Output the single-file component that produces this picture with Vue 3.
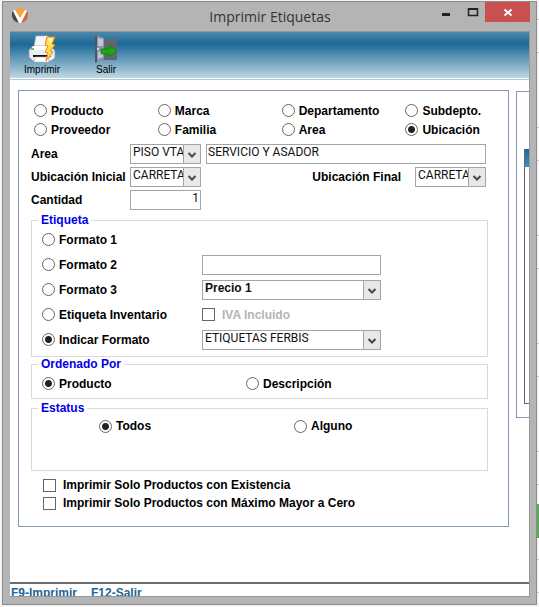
<script setup>
import { ref } from 'vue'

const filters = ['Producto', 'Marca', 'Departamento', 'Subdepto.', 'Proveedor', 'Familia', 'Area', 'Ubicación']
const filter = ref('Ubicación')
const area = ref('PISO VTA')
const areaName = ref('SERVICIO Y ASADOR')
const from = ref('CARRETA')
const to = ref('CARRETA')
const quantity = ref('1')
const format = ref('indicar')
const formatText = ref('')
const price = ref('Precio 1')
const taxIncluded = ref(false)
const template = ref('ETIQUETAS FERBIS')
const order = ref('producto')
const status = ref('todos')
const onlyStock = ref(false)
const onlyMax = ref(false)
</script>

<template>
  <div class="desktop">
    <section class="window">
      <header class="titlebar">
        <svg class="logo" viewBox="0 0 16 16" aria-hidden="true">
          <path d="M2 3Q8-3 14 3L8 13Z" fill="#f3a63a" />
          <path d="M0 4L2 3L8 15Q1 14 0 8Z" fill="#46474d" />
          <path d="M16 4L14 3L8 15Q15 14 16 8Z" fill="#e2603c" />
          <path d="M1 3L3 2L8 10L13 2L15 3L9 15H7Z" fill="#fff" />
        </svg>
        <h1>Imprimir Etiquetas</h1>
        <div class="controls">
          <button type="button" aria-label="Minimizar">
            <svg width="30" height="20" viewBox="0 0 30 20"><path d="M9 12.500h8" stroke="#222" stroke-width="3" /></svg>
          </button>
          <button type="button" aria-label="Maximizar">
            <svg width="22" height="20" viewBox="0 0 22 20"><path d="M5.500 7h9v6.500h-9z" fill="none" stroke="#222" stroke-width="1.500" /><path d="M5 7h10" stroke="#222" stroke-width="2" /></svg>
          </button>
          <button type="button" class="close" aria-label="Cerrar">
            <svg width="45" height="20" viewBox="0 0 45 20"><path d="M19.500 7.500l7 6M26.500 7.500l-7 6" stroke="#fff" stroke-width="2" /></svg>
          </button>
        </div>
      </header>

      <div class="client">
        <nav class="toolbar">
          <button type="button">
            <svg width="28" height="28" viewBox="0 0 28 28" aria-hidden="true">
              <path d="M8 1L20 1L22 12H6Z" fill="#f7f7fa" stroke="#b9bfca" stroke-width=".7" />
              <path d="M5 11L23 11L27 16V23L23 26H5L1 22V15Z" fill="#ececf1" stroke="#8f96a5" stroke-width=".7" />
              <path d="M5 11H22L24 15H3Z" fill="#fff" />
              <path d="M3 14L6 14" stroke="#35b13b" stroke-width="1.500" />
              <path d="M5 20H21L23 22H5Z" fill="#15171c" />
              <path d="M7 22H20L21 27H6Z" fill="#fff" stroke="#aeb4c0" stroke-width=".6" />
              <path d="M19 2L27 2L24 9L27 10L22 16L25 17L18 26L20 18L17 17L20 11L17 10Z" fill="#ffe34b" stroke="#f07e22" stroke-width="1" />
              <path d="M20 3L25 3L22 9" fill="#fff6bd" />
            </svg>
            <span>Imprimir</span>
          </button>
          <button type="button">
            <svg width="28" height="28" viewBox="0 0 28 28" aria-hidden="true">
              <path d="M4 4H25V25H4Z" fill="#62676f" />
              <path d="M3 0L12 3V24L3 28Z" fill="#8995a6" />
              <path d="M3 0L5 1V27L3 28Z" fill="#4c5869" />
              <path d="M6 3L11 4V11L6 11ZM6 17L11 16V22L6 24Z" fill="#bdc7d3" />
              <circle cx="6" cy="14" r="1" fill="#eef3f7" />
              <path d="M9 14H17V10L25 16L17 22V19H9Z" fill="#17a918" stroke="#08760d" stroke-width=".6" />
            </svg>
            <span>Salir</span>
          </button>
        </nav>

        <div class="body">
          <form class="panel" @submit.prevent>
            <div class="filters">
              <label v-for="f in filters" :key="f" class="option">
                <input v-model="filter" type="radio" name="filter" :value="f" />{{ f }}
              </label>
            </div>

            <div class="fields">
              <div class="field">
                <label class="caption" for="area">Area</label>
                <span class="combo short">
                  <select id="area" v-model="area"><option>PISO VTA</option></select>
                  <svg width="18" height="20" viewBox="0 0 18 20" aria-hidden="true"><path class="face" d="M.5.5h17v19H.5z" /><path class="arrow" d="M5.500 9L9 12.500L12.500 9" /></svg>
                </span>
                <input v-model="areaName" class="text grow" type="text" aria-label="Nombre del area" />
              </div>
              <div class="field">
                <label class="caption" for="from">Ubicación Inicial</label>
                <span class="combo short">
                  <select id="from" v-model="from"><option>CARRETA</option></select>
                  <svg width="18" height="20" viewBox="0 0 18 20" aria-hidden="true"><path class="face" d="M.5.5h17v19H.5z" /><path class="arrow" d="M5.500 9L9 12.500L12.500 9" /></svg>
                </span>
                <label class="final" for="to">Ubicación Final</label>
                <span class="combo short">
                  <select id="to" v-model="to"><option>CARRETA</option></select>
                  <svg width="18" height="20" viewBox="0 0 18 20" aria-hidden="true"><path class="face" d="M.5.5h17v19H.5z" /><path class="arrow" d="M5.500 9L9 12.500L12.500 9" /></svg>
                </span>
              </div>
              <div class="field">
                <label class="caption" for="quantity">Cantidad</label>
                <input id="quantity" v-model="quantity" class="text short number" type="text" />
              </div>
            </div>

            <fieldset class="formats">
              <legend>Etiqueta</legend>
              <div class="row">
                <label class="option"><input v-model="format" type="radio" name="format" value="1" />Formato 1</label>
              </div>
              <div class="row">
                <label class="option"><input v-model="format" type="radio" name="format" value="2" />Formato 2</label>
                <input v-model="formatText" class="text" type="text" aria-label="Texto de formato 2" />
              </div>
              <div class="row">
                <label class="option"><input v-model="format" type="radio" name="format" value="3" />Formato 3</label>
                <span class="combo">
                  <select v-model="price" class="strong" aria-label="Precio"><option>Precio 1</option></select>
                  <svg width="18" height="20" viewBox="0 0 18 20" aria-hidden="true"><path class="face" d="M.5.5h17v19H.5z" /><path class="arrow" d="M5.500 9L9 12.500L12.500 9" /></svg>
                </span>
              </div>
              <div class="row">
                <label class="option"><input v-model="format" type="radio" name="format" value="inventario" />Etiqueta Inventario</label>
                <label class="check disabled"><input v-model="taxIncluded" type="checkbox" disabled />IVA Incluido</label>
              </div>
              <div class="row">
                <label class="option"><input v-model="format" type="radio" name="format" value="indicar" />Indicar Formato</label>
                <span class="combo">
                  <select v-model="template" aria-label="Formato"><option>ETIQUETAS FERBIS</option></select>
                  <svg width="18" height="20" viewBox="0 0 18 20" aria-hidden="true"><path class="face" d="M.5.5h17v19H.5z" /><path class="arrow" d="M5.500 9L9 12.500L12.500 9" /></svg>
                </span>
              </div>
            </fieldset>

            <fieldset class="order">
              <legend>Ordenado Por</legend>
              <label class="option"><input v-model="order" type="radio" name="order" value="producto" />Producto</label>
              <label class="option"><input v-model="order" type="radio" name="order" value="descripcion" />Descripción</label>
            </fieldset>

            <fieldset class="status">
              <legend>Estatus</legend>
              <label class="option"><input v-model="status" type="radio" name="status" value="todos" />Todos</label>
              <label class="option"><input v-model="status" type="radio" name="status" value="alguno" />Alguno</label>
            </fieldset>

            <div class="checks">
              <label class="check"><input v-model="onlyStock" type="checkbox" />Imprimir Solo Productos con Existencia</label>
              <label class="check"><input v-model="onlyMax" type="checkbox" />Imprimir Solo Productos con Máximo Mayor a Cero</label>
            </div>
          </form>

          <aside class="next-panel">
            <div class="list"><div class="list-head"></div></div>
          </aside>
        </div>

        <footer class="keys">
          <span>F9-Imprimir</span>
          <span>F12-Salir</span>
        </footer>
      </div>
    </section>

    <div class="behind"><div class="green"></div></div>
  </div>
</template>

<style>
body {
  background: #f4f4f4;
}
</style>

<style scoped>
* {
  box-sizing: border-box;
}
.desktop {
  display: grid;
  grid-template-columns: minmax(0, 1fr) 2px;
  min-height: 100vh;
  padding-left: 2px;
  font: bold 12px/14px "Liberation Sans", Arial, sans-serif;
  color: #000;
}
.window {
  display: flex;
  flex-direction: column;
  margin: 1px 0 2px;
  padding: 0 6px 7px 7px;
  border: 1px solid #8b8b8b;
  background: #b4b4b4;
}
.titlebar {
  display: grid;
  grid-template-columns: 1fr auto 1fr;
  height: 29px;
}
.logo {
  width: 16px;
  height: 16px;
  margin: 6px 0 0 2px;
}
h1 {
  margin: 0;
  padding-top: 5px;
  font: 14px/20px "Open Sans", "Noto Sans", sans-serif;
  color: #333;
}
.controls {
  display: flex;
  justify-content: flex-end;
  align-items: flex-start;
}
.controls button {
  display: flex;
  padding: 0;
  border: 0;
  background: none;
}
.controls .close {
  background: #c9504f;
}
.client {
  flex: 1;
  display: flex;
  flex-direction: column;
  border: 1px solid #989898;
  border-width: 1px 1px 1px 0;
  background: #fff;
}
.toolbar {
  display: flex;
  gap: 32px;
  height: 48px;
  padding: 3px 0 0 14px;
  border-bottom: 1px solid #b3c8d6;
  box-shadow: inset 0 -1px #fff;
  background: linear-gradient(#4d88ac, #1c6896 12px, #4285aa 20px, #c0d7e3 46px);
}
.toolbar button {
  display: flex;
  flex-direction: column;
  align-items: center;
  padding: 0;
  border: 0;
  background: none;
  font: 10px/14px "Liberation Sans", Arial, sans-serif;
  color: #000;
}
.body {
  flex: 1;
  display: flex;
  align-items: flex-start;
  gap: 7px;
  padding: 10px 0 10px 8px;
}
.panel {
  flex: 1;
  min-width: 0;
  padding: 10px 20px 14px 12px;
  border: 1px solid #829ab1;
}
.option,
.check {
  display: flex;
  align-items: center;
  white-space: nowrap;
}
.option input,
.check input {
  appearance: none;
  flex: none;
  width: 13px;
  height: 13px;
  margin: 0;
  border: 1px solid #666;
  background: #fff;
}
.option input {
  margin-right: 4px;
  border-radius: 50%;
}
.option input:checked {
  background: radial-gradient(circle, #222 0 3px, #fff 4px);
}
.check input {
  margin-right: 7px;
}
.filters {
  display: grid;
  grid-template-columns: 3fr 3fr 3fr 2fr;
  grid-auto-rows: 19px;
  padding-left: 3px;
}
.fields {
  display: grid;
  gap: 3px;
  margin: 5px 2px 0 0;
}
.field {
  display: flex;
  align-items: center;
  height: 20px;
}
.caption {
  width: 99px;
  white-space: nowrap;
}
.final {
  margin: 0 14px 0 auto;
}
.text,
select {
  display: block;
  width: 100%;
  height: 20px;
  margin: 0;
  padding: 0 2px 4px;
  border: 1px solid #a2a5a8;
  border-radius: 0;
  background: #fff;
  font: 12px/14px Roboto, "Liberation Sans", sans-serif;
  color: #111;
}
select {
  appearance: none;
  padding-right: 17px;
}
.strong {
  font: bold 12px/14px "Liberation Sans", Arial, sans-serif;
}
.grow {
  flex: 1;
  margin-left: 5px;
  padding-left: 1px;
}
.combo {
  position: relative;
}
.short {
  flex: none;
  width: 71px;
}
.number {
  padding-right: 1px;
  text-align: right;
}
.combo svg {
  position: absolute;
  top: 0;
  right: 0;
  pointer-events: none;
}
.face {
  fill: #e8e8e8;
  stroke: #a2a5a8;
}
.arrow {
  fill: none;
  stroke: #484848;
  stroke-width: 2;
}
fieldset {
  min-width: 0;
  margin: 0;
  padding: 0 10px;
  border: 1px solid #d9d9d9;
}
legend {
  height: 14px;
  margin-left: -4px;
  padding: 0 3px;
  color: #0000e8;
}
.formats {
  margin-top: 3px;
  padding-bottom: 4px;
}
.row {
  display: grid;
  grid-template-columns: 160px 179px;
  align-items: center;
  height: 25px;
}
.disabled {
  color: #b5b5b5;
}
.order {
  display: grid;
  grid-template-columns: 204px 1fr;
  grid-auto-rows: 25px;
  padding-bottom: 2px;
}
.status {
  display: grid;
  grid-template-columns: 195px 1fr;
  grid-auto-rows: 22px;
  margin-top: 2px;
  padding-bottom: 33px;
}
.status .option {
  padding-left: 57px;
}
.checks {
  display: grid;
  grid-auto-rows: 18px;
  margin-top: 5px;
  padding-left: 12px;
}
.next-panel {
  width: 13px;
  height: 327px;
  margin-top: 1px;
  padding: 57px 0 13px 7px;
  border: 1px solid #829ab1;
  border-right: 0;
}
.list {
  height: 100%;
  border: 1px solid #666;
  border-width: 0 0 1px 1px;
}
.list-head {
  height: 18px;
  background: linear-gradient(#1c6896, #3c93c4);
}
.keys {
  display: flex;
  gap: 14px;
  height: 14px;
  padding: 2px 0 0 1px;
  border-top: 2px solid #6d6d6d;
  overflow: hidden;
  color: #1f6492;
}
.behind {
  padding-top: 504px;
  background: repeating-linear-gradient(transparent 0 19px, #c4c4c4 19px 20px, transparent 20px 52px, #c4c4c4 52px 53px, transparent 53px 108px);
}
.green {
  height: 34px;
  background: #58a758;
}
</style>
